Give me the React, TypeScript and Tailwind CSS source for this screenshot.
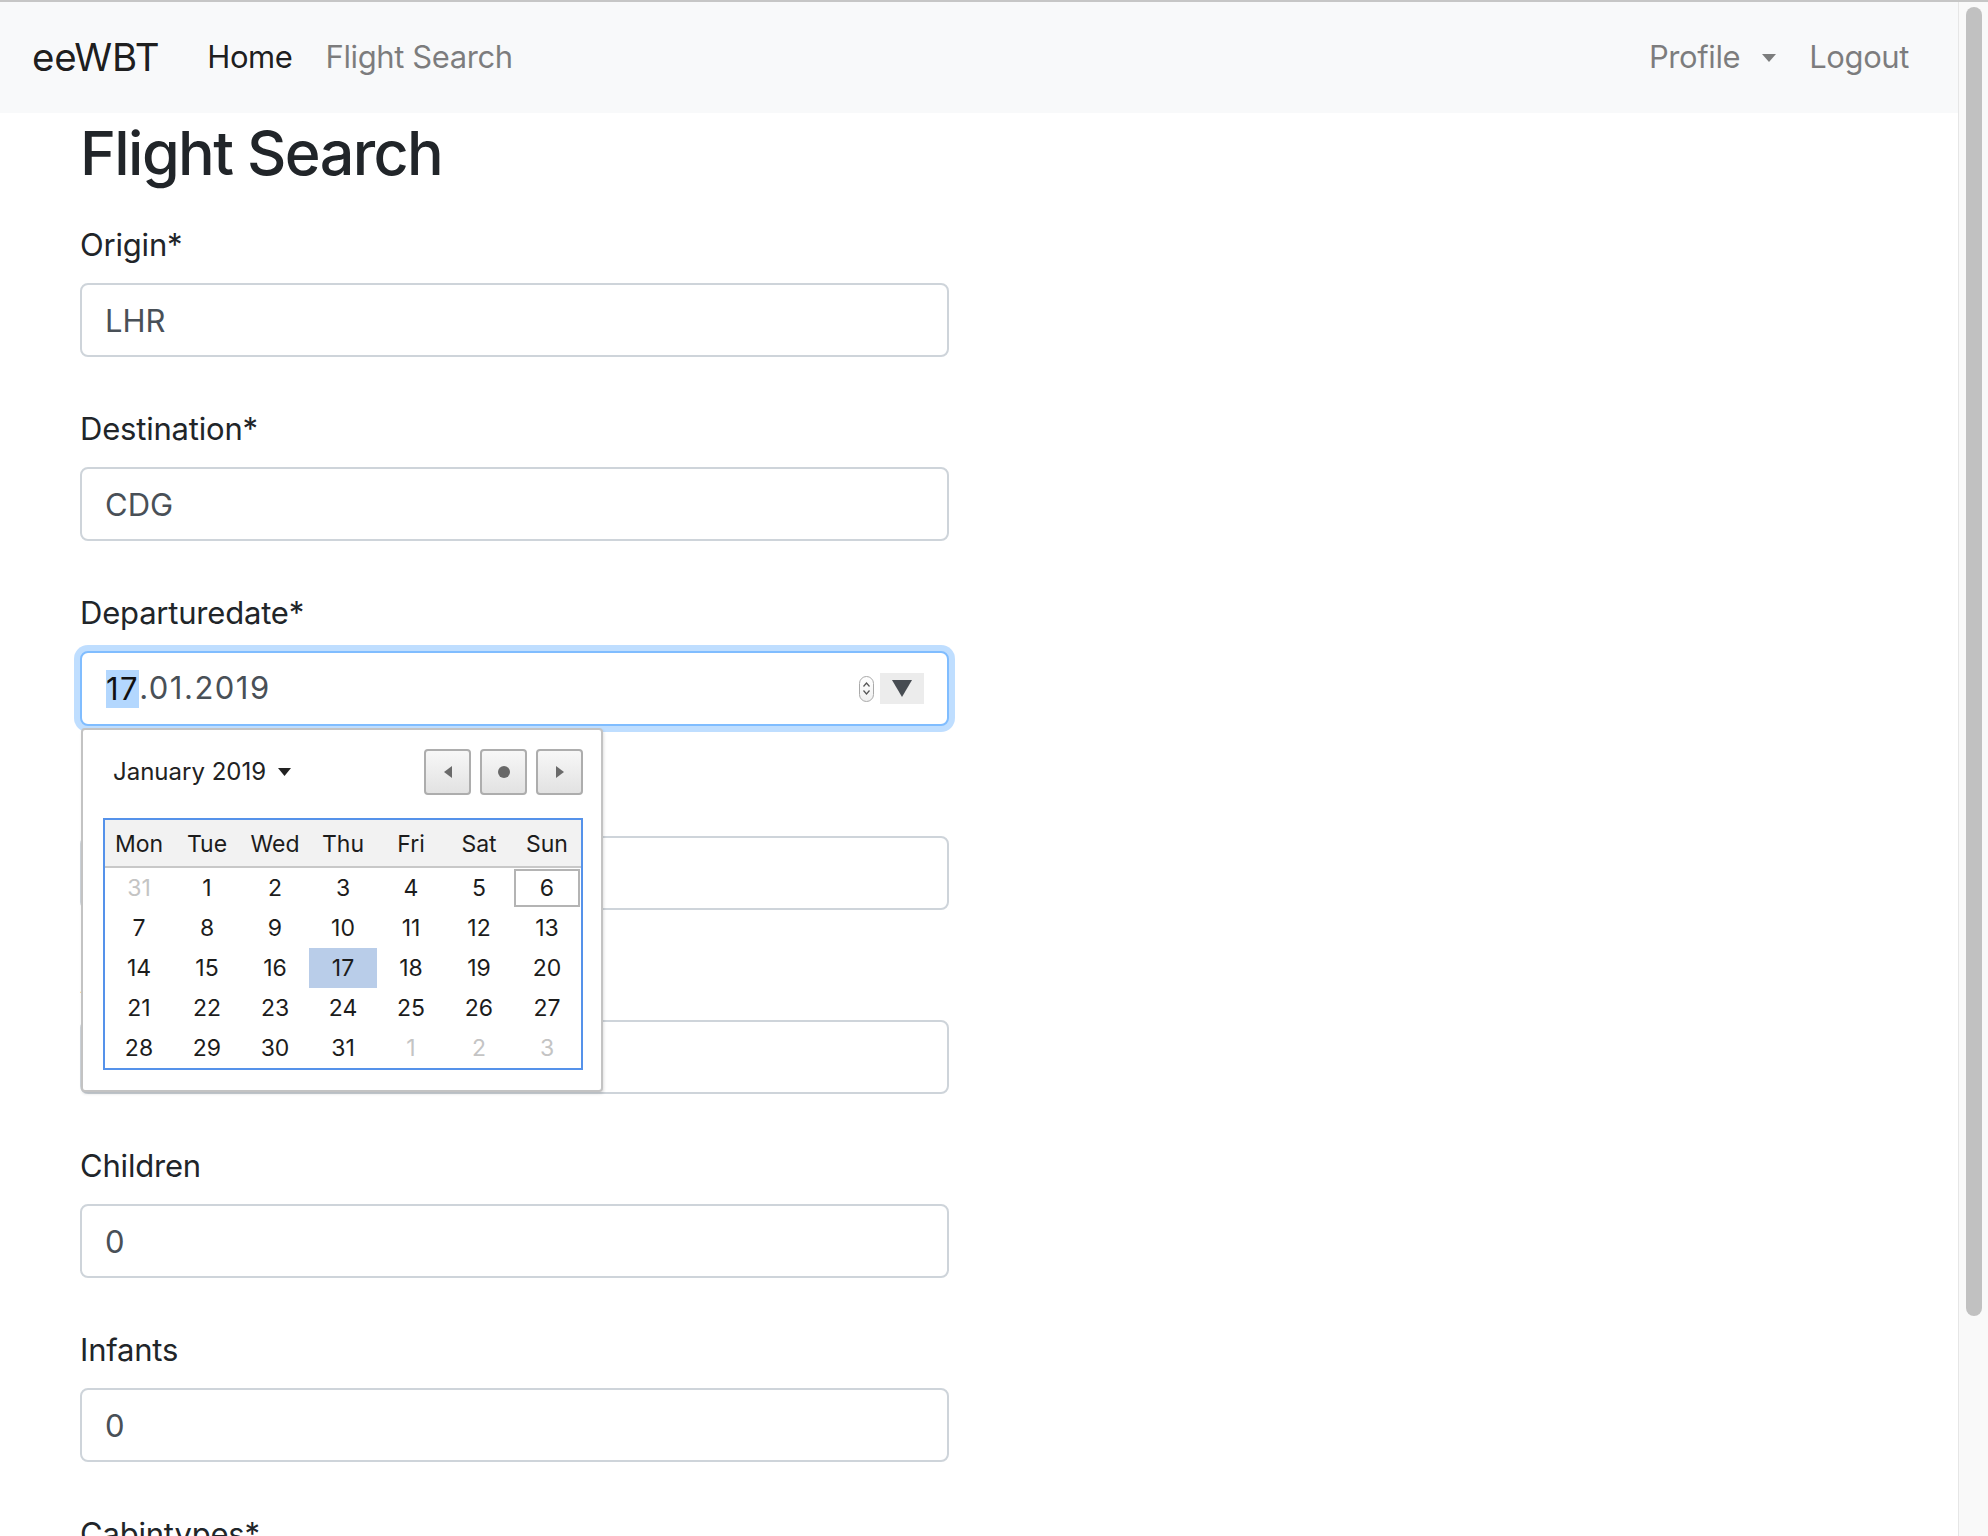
import type { ReactNode } from "react";

type Day = { n: number; muted?: boolean };

const DAY_NAMES = ["Mon", "Tue", "Wed", "Thu", "Fri", "Sat", "Sun"];

const WEEKS: Day[][] = [
  [{ n: 31, muted: true }, { n: 1 }, { n: 2 }, { n: 3 }, { n: 4 }, { n: 5 }, { n: 6 }],
  [{ n: 7 }, { n: 8 }, { n: 9 }, { n: 10 }, { n: 11 }, { n: 12 }, { n: 13 }],
  [{ n: 14 }, { n: 15 }, { n: 16 }, { n: 17 }, { n: 18 }, { n: 19 }, { n: 20 }],
  [{ n: 21 }, { n: 22 }, { n: 23 }, { n: 24 }, { n: 25 }, { n: 26 }, { n: 27 }],
  [{ n: 28 }, { n: 29 }, { n: 30 }, { n: 31 }, { n: 1, muted: true }, { n: 2, muted: true }, { n: 3, muted: true }],
];

const TODAY = 6;
const SELECTED = 17;

function Field({ label, children }: { label: string; children: ReactNode }) {
  return (
    <div className="mb-[49px]">
      <label className="mb-[15px] block text-[31px] leading-[46px] tracking-[-0.2px] text-[#212529]">{label}</label>
      {children}
    </div>
  );
}

function TextInput({ value }: { value: string }) {
  return (
    <input
      readOnly
      value={value}
      className="block h-[74px] w-[869px] rounded-[8px] border-2 border-[#ced4da] bg-white pl-[23px] text-[31px] text-[#495057] outline-none"
    />
  );
}

function NavButton({ children }: { children: ReactNode }) {
  return (
    <button
      type="button"
      className="flex h-[46px] w-[47px] items-center justify-center rounded-[4px] border-2 border-[#adadad] bg-gradient-to-b from-[#f7f7f7] to-[#e2e2e2]"
    >
      {children}
    </button>
  );
}

function DatePopup() {
  return (
    <div className="absolute left-[1px] top-[77px] z-10 h-[364px] w-[522px] rounded-[4px] border-2 border-[#c3c3c3] bg-white pl-[20px] pr-[18px] pt-[19px] shadow-[1px_2px_3px_rgba(0,0,0,0.12)]">
      {/* month header + prev / today / next */}
      <div className="flex h-[46px] items-center justify-between">
        <div className="flex items-center pl-[10px] text-[24px] text-[#222]">
          January 2019
          <svg className="ml-[12px]" width="13" height="8" viewBox="0 0 13 8">
            <path d="M0 0h13L6.5 8z" fill="#222" />
          </svg>
        </div>
        <div className="flex gap-[9px]">
          <NavButton>
            <svg width="8" height="12" viewBox="0 0 8 12">
              <path d="M8 0v12L0 6z" fill="#6a6a6a" />
            </svg>
          </NavButton>
          <NavButton>
            <span className="h-[12px] w-[12px] rounded-full bg-[#686868]" />
          </NavButton>
          <NavButton>
            <svg width="8" height="12" viewBox="0 0 8 12">
              <path d="M0 0v12L8 6z" fill="#6a6a6a" />
            </svg>
          </NavButton>
        </div>
      </div>

      {/* month grid */}
      <div className="mt-[23px] w-[480px] border-2 border-[#5592ea] text-[23px] text-[#1c1c1c]">
        <div className="grid h-[48px] grid-cols-7 border-b-2 border-[#c8c8c8] bg-[#f2f2f2]">
          {DAY_NAMES.map((d) => (
            <div key={d} className="flex items-center justify-center pt-[2px]">
              {d}
            </div>
          ))}
        </div>
        {WEEKS.map((week, i) => (
          <div key={i} className="grid h-[40px] grid-cols-7">
            {week.map((day, j) => {
              const isToday = !day.muted && day.n === TODAY;
              const isSel = !day.muted && day.n === SELECTED;
              return (
                <div
                  key={j}
                  className={`flex items-center justify-center ${isSel ? "bg-[#b9cde9]" : ""} ${
                    day.muted ? "text-[#c4c4c4]" : ""
                  }`}
                >
                  {isToday ? (
                    <span className="flex h-[38px] w-[66px] items-center justify-center border-2 border-[#b4b4b4]">
                      {day.n}
                    </span>
                  ) : (
                    day.n
                  )}
                </div>
              );
            })}
          </div>
        ))}
      </div>
    </div>
  );
}

function DateInput() {
  return (
    <div className="relative">
      <div className="flex h-[75px] w-[869px] items-center rounded-[8px] border-2 border-[#80bdff] bg-white pl-[24px] pr-[23px] text-[31px] tracking-[1.5px] text-[#495057] shadow-[0_0_0_6px_rgba(0,123,255,0.25)]">
        <span className="bg-[#b3d7fe] leading-[38px] text-[#111]">17</span>
        <span>.01.2019</span>
        <span className="ml-auto flex h-[26px] w-[15px] flex-col items-center justify-center gap-[3px] rounded-full border border-[#a9a9a9] bg-gradient-to-b from-white to-[#f0f0f0]">
          <svg width="7" height="5" viewBox="0 0 7 5">
            <path d="M0.5 4.5L3.5 1L6.5 4.5" fill="none" stroke="#555" strokeWidth="1.2" />
          </svg>
          <svg width="7" height="5" viewBox="0 0 7 5">
            <path d="M0.5 0.5L3.5 4L6.5 0.5" fill="none" stroke="#555" strokeWidth="1.2" />
          </svg>
        </span>
        <span className="ml-[6px] flex h-[31px] w-[44px] items-center justify-center bg-[#ececec]">
          <svg width="20" height="17" viewBox="0 0 20 17">
            <path d="M0 0h20L10 17z" fill="#474c52" />
          </svg>
        </span>
      </div>
      <DatePopup />
    </div>
  );
}

export default function App() {
  return (
    <div className="flex h-[1536px] w-[1988px] flex-col overflow-hidden bg-white font-['Inter',sans-serif]">
      <div className="h-[2px] shrink-0 bg-[#c6c6c6]" />
      <div className="flex min-h-0 flex-1">
        <div className="flex min-w-0 flex-1 flex-col">
          <nav className="flex h-[111px] shrink-0 items-center bg-[#f8f9fa] pl-[32px] pr-[49px]">
            <span className="mr-[48px] text-[38.5px] tracking-[-0.3px] text-black/90">eeWBT</span>
            <span className="mr-[33px] text-[31px] tracking-[-0.4px] text-black/90">Home</span>
            <span className="text-[31px] tracking-[-0.4px] text-black/50">Flight Search</span>
            <div className="ml-auto flex items-center text-[31px] tracking-[-0.4px] text-black/50">
              <span>Profile</span>
              <svg className="ml-[22px]" width="14" height="8" viewBox="0 0 14 8">
                <path d="M0 0h14L7 8z" fill="#7c7d7d" />
              </svg>
              <span className="ml-[33px]">Logout</span>
            </div>
          </nav>

          <main className="pl-[80px] pt-[4px]">
            <h1 className="mb-[32px] text-[61px] font-medium leading-[73px] tracking-[-1.6px] text-[#212529]">
              Flight Search
            </h1>
            <Field label="Origin*">
              <TextInput value="LHR" />
            </Field>
            <Field label="Destination*">
              <TextInput value="CDG" />
            </Field>
            <Field label="Departuredate*">
              <DateInput />
            </Field>
            <Field label="Returndate">
              <TextInput value="" />
            </Field>
            <Field label="Adults*">
              <TextInput value="" />
            </Field>
            <Field label="Children">
              <TextInput value="0" />
            </Field>
            <Field label="Infants">
              <TextInput value="0" />
            </Field>
            <Field label="Cabintypes*">
              <TextInput value="" />
            </Field>
          </main>
        </div>

        {/* window scrollbar */}
        <div className="w-[30px] shrink-0 border-l border-[#e6e6e6] bg-[#f9f9f9] pl-[7px] pt-[5px]">
          <div className="h-[1309px] w-[16px] rounded-full bg-[#c1c1c1]" />
        </div>
      </div>
    </div>
  );
}
